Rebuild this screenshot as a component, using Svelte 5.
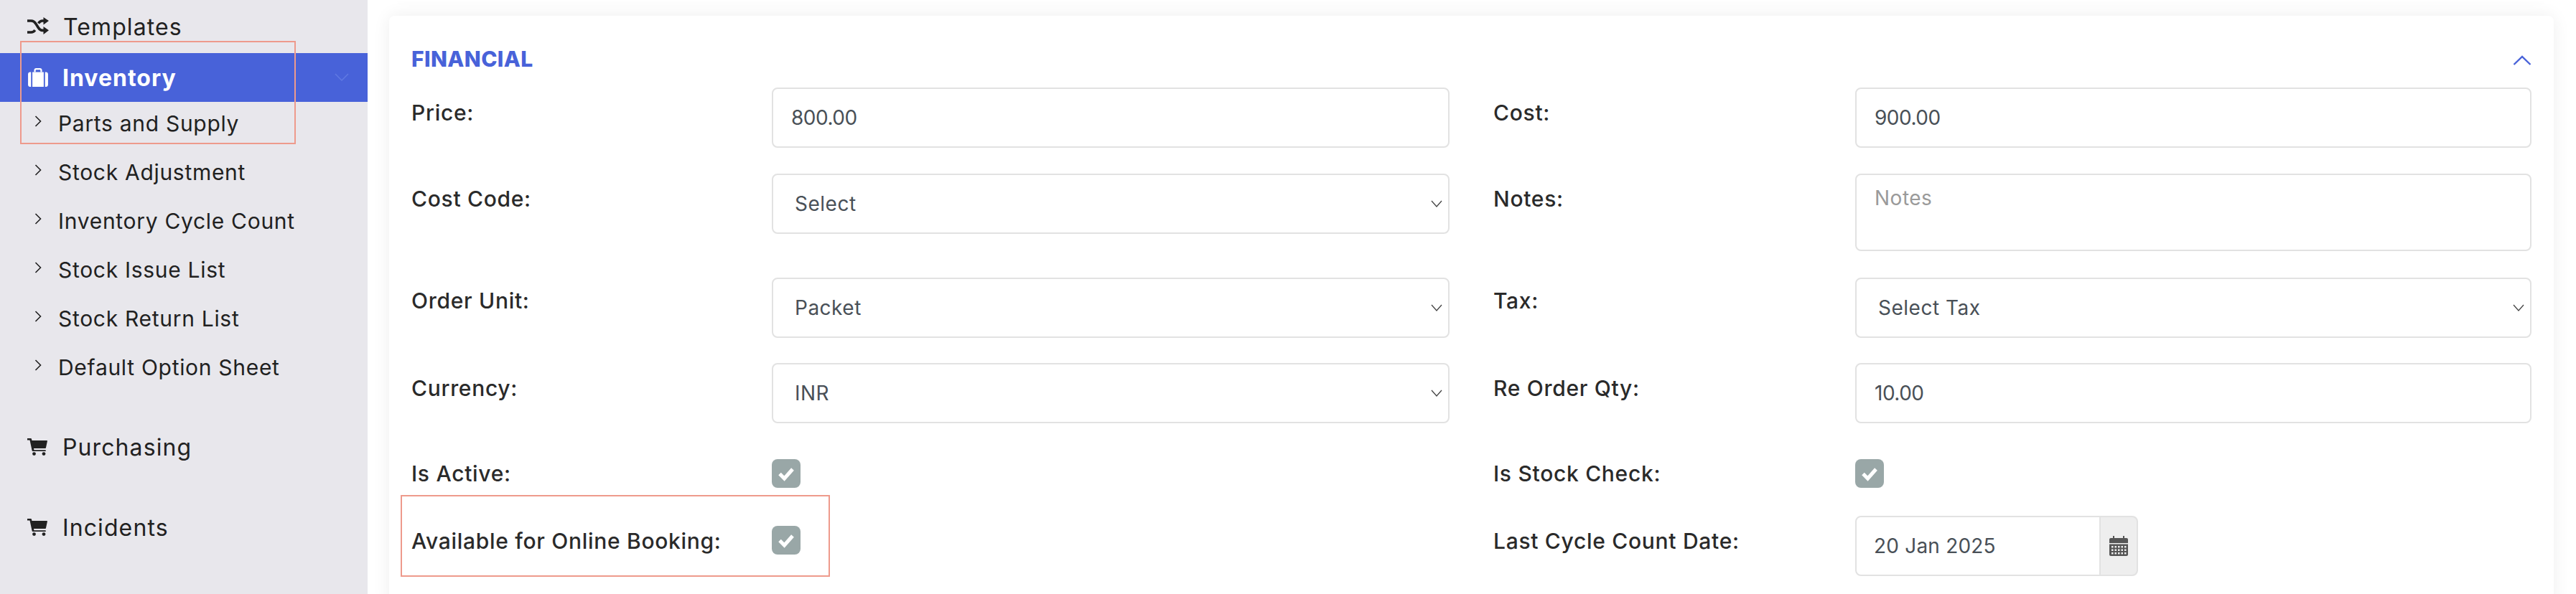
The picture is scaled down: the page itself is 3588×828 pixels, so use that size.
<script>
	const subItems = [
		'Parts and Supply',
		'Stock Adjustment',
		'Inventory Cycle Count',
		'Stock Issue List',
		'Stock Return List',
		'Default Option Sheet'
	];
</script>

{#snippet cart()}
	<svg class="cart" viewBox="0 0 28 24" aria-hidden="true">
		<path d="M0 0h4.600c.8 0 1.300.5 1.500 1.200L6.400 3H27c.7 0 1 .5.9 1.100l-1.900 9c-.1.6-.6 1-1.200 1H9l.4 2.200h15.400c.6 0 1 .4 1 1v.8H7.900c-.7 0-1.200-.4-1.300-1L3.500 2.400H0z" />
		<circle cx="9.500" cy="21.600" r="2.400" />
		<circle cx="23" cy="21.600" r="2.400" />
	</svg>
{/snippet}

{#snippet check()}
	<span class="checkbox">
		<svg viewBox="0 0 40 40" aria-hidden="true">
			<path d="M11 20.500l6.500 6.500L29 14" fill="none" stroke="#fff" stroke-width="5" />
		</svg>
	</span>
{/snippet}

{#snippet arrow()}
	<svg class="select-arrow" viewBox="0 0 16 10" aria-hidden="true">
		<path d="M1 1l7 8 7-8" fill="none" stroke="#444" stroke-width="1.300" />
	</svg>
{/snippet}

<div class="page">
	<aside class="sidebar">
		<div class="nav-item templates">
			<svg class="nav-icon shuffle" viewBox="0 0 30 26" aria-hidden="true">
				<path d="M0 5h5.500c3 0 4.800 1.600 6.500 4.200l3.500 5.600c1.500 2.300 3 3.600 5.500 3.600h2" fill="none" stroke="#212121" stroke-width="3.600" />
				<path d="M0 21h5.500c2.500 0 4-1.200 5.300-3M15.500 8.500c1.500-2 3-3.500 5.500-3.500h2" fill="none" stroke="#212121" stroke-width="3.600" />
				<path d="M22.500 0L30 5l-7.500 5.500zM22.500 13L30 18.300l-7.500 5.700z" fill="#212121" />
			</svg>
			<span>Templates</span>
		</div>
		<div class="nav-item active">
			<svg class="nav-icon" viewBox="0 0 30 28" aria-hidden="true">
				<path d="M9 6V3c0-1.700 1.300-3 3-3h6c1.700 0 3 1.300 3 3v3h-2.400V3.200c0-.5-.3-.8-.8-.8h-5.600c-.5 0-.8.300-.8.800V6z" fill="#fff" />
				<path d="M6.500 6h17v22h-17zM4.500 6v22H3c-1.700 0-3-1.300-3-3V9c0-1.700 1.300-3 3-3zM25.500 6H27c1.700 0 3 1.300 3 3v16c0 1.700-1.300 3-3 3h-1.500z" fill="#fff" />
			</svg>
			<span>Inventory</span>
			<svg class="nav-caret" viewBox="0 0 20 11" aria-hidden="true">
				<path d="M1 1l9 9 9-9" fill="none" stroke="#6079e2" stroke-width="1.500" />
			</svg>
		</div>
		<ul class="sub-list">
			{#each subItems as item}
				<li>
					<svg viewBox="0 0 10 16" aria-hidden="true">
						<path d="M1.500 1l7 7-7 7" fill="none" stroke="#212121" stroke-width="1.600" />
					</svg>
					<span>{item}</span>
				</li>
			{/each}
		</ul>
		<div class="nav-item purchasing">
			{@render cart()}
			<span>Purchasing</span>
		</div>
		<div class="nav-item incidents">
			{@render cart()}
			<span>Incidents</span>
		</div>
		<div class="annotation nav-note"></div>
	</aside>

	<main class="content">
		<div class="card stub"></div>
		<section class="card">
			<header class="card-head">
				<h2>FINANCIAL</h2>
				<svg viewBox="0 0 26 14" aria-hidden="true">
					<path d="M1.500 13L13 2l11.500 11" fill="none" stroke="#4862d9" stroke-width="2.400" />
				</svg>
			</header>

			<div class="row r1">
				<div class="label">Price:</div>
				<div class="field num">800.00</div>
				<div></div>
				<div class="label">Cost:</div>
				<div class="field num">900.00</div>
			</div>
			<div class="row r2">
				<div class="label">Cost Code:</div>
				<div class="field select"><span>Select</span>{@render arrow()}</div>
				<div></div>
				<div class="label">Notes:</div>
				<div class="field textarea">Notes</div>
			</div>
			<div class="row r3">
				<div class="label up">Order Unit:</div>
				<div class="field select"><span>Packet</span>{@render arrow()}</div>
				<div></div>
				<div class="label up">Tax:</div>
				<div class="field select"><span>Select Tax</span>{@render arrow()}</div>
			</div>
			<div class="row r4">
				<div class="label">Currency:</div>
				<div class="field select"><span>INR</span>{@render arrow()}</div>
				<div></div>
				<div class="label">Re Order Qty:</div>
				<div class="field num">10.00</div>
			</div>
			<div class="row r5">
				<div class="label flat">Is Active:</div>
				<div>{@render check()}</div>
				<div></div>
				<div class="label flat">Is Stock Check:</div>
				<div>{@render check()}</div>
			</div>
			<div class="row r6">
				<div class="label online">Available for Online Booking:</div>
				<div class="online-check">{@render check()}</div>
				<div></div>
				<div class="label online">Last Cycle Count Date:</div>
				<div class="date">
					<div class="date-value">20 Jan 2025</div>
					<div class="date-addon">
						<svg viewBox="0 0 26 28" aria-hidden="true">
							<path fill="#555" d="M5 0h2v3h12V0h2v3h3c1.100 0 2 .9 2 2v5H0V5c0-1.100.9-2 2-2h3z" />
							<path fill="#555" fill-rule="evenodd" d="M0 11.500h26V26c0 1.100-.9 2-2 2H2c-1.100 0-2-.9-2-2zM3 14v2.500h2.500V14zm4.500 0v2.500H10V14zm4.500 0v2.500h2.500V14zm4.500 0v2.500H19V14zm4.500 0v2.500h2.500V14zM3 18.500V21h2.500v-2.500zm4.500 0V21H10v-2.500zm4.500 0V21h2.500v-2.500zm4.500 0V21h2.500v-2.500zm4.500 0V21h2.500v-2.500zM3 23v2.500h2.500V23zm4.500 0v2.500H10V23zm4.500 0v2.500h2.500V23zm4.500 0v2.500H19V23zm4.500 0v2.500h2.500V23z" />
						</svg>
					</div>
				</div>
			</div>
			<div class="annotation form-note"></div>
		</section>
	</main>
</div>

<style>
	:global(body) {
		margin: 0;
		background: #fff;
	}

	.page {
		display: flex;
		width: 3588px;
		height: 828px;
		overflow: hidden;
		font-family: Inter, "Noto Sans", sans-serif;
		color: #212121;
	}

	.sidebar {
		position: relative;
		flex: none;
		width: 512px;
		background: #e8e7ec;
		box-sizing: border-box;
	}

	.nav-item {
		display: flex;
		align-items: center;
		height: 68px;
		padding-left: 38px;
		font-size: 32px;
		letter-spacing: 1.1px;
		box-sizing: border-box;
	}

	.templates {
		height: 74px;
	}

	.templates span {
		margin-left: 20px;
	}

	.nav-icon {
		width: 30px;
		height: 26px;
		flex: none;
	}

	.active {
		position: relative;
		background: #4862d9;
		color: #fff;
		font-weight: 700;
		letter-spacing: 1px;
	}

	.active span {
		margin-left: 19px;
	}

	.nav-caret {
		position: absolute;
		left: 466px;
		top: 28px;
		width: 20px;
		height: 11px;
	}

	.sub-list {
		list-style: none;
		margin: 0;
		padding: 0;
	}

	.sub-list li {
		display: flex;
		align-items: flex-start;
		height: 68px;
		padding-left: 48px;
		box-sizing: border-box;
		font-size: 30px;
		letter-spacing: 0.7px;
		line-height: 60px;
	}

	.sub-list svg {
		width: 10px;
		height: 16px;
		flex: none;
		margin-top: 19px;
	}

	.sub-list span {
		margin-left: 23px;
	}

	.purchasing {
		margin-top: 17px;
		height: 112px;
	}

	.incidents {
		height: 112px;
	}

	.cart {
		width: 28px;
		height: 24px;
		flex: none;
		fill: #212121;
	}

	.purchasing span,
	.incidents span {
		margin-left: 21px;
	}

	.annotation {
		position: absolute;
		border: 2px solid #ee9a8c;
		box-sizing: border-box;
		pointer-events: none;
	}

	.nav-note {
		left: 28px;
		top: 57px;
		width: 384px;
		height: 144px;
	}

	.content {
		flex: 1;
		min-width: 0;
		padding: 0 31px 0 30px;
	}

	.card {
		position: relative;
		background: #fff;
		border-radius: 8px;
		box-shadow: 0 0 24px rgba(0, 0, 0, 0.07);
		padding: 0 31px;
		margin-bottom: 20px;
	}

	.stub {
		height: 2px;
		padding: 0;
		border-radius: 0 0 8px 8px;
		margin-right: 2px;
	}

	.card-head {
		display: flex;
		justify-content: space-between;
		align-items: center;
		box-sizing: border-box;
		height: 100px;
		padding-top: 20px;
	}

	.card-head h2 {
		margin: 0;
		font-size: 30px;
		font-weight: 800;
		color: #4862d9;
		letter-spacing: 0.4px;
	}

	.card-head svg {
		width: 26px;
		height: 14px;
		margin-top: 3px;
	}

	.row {
		display: grid;
		grid-template-columns: 502px 944px 61px 504px 942px;
	}

	.r1 { height: 120px; }
	.r2 { height: 145px; }
	.r3 { height: 119px; }
	.r4 { height: 134px; }
	.r5 { height: 79px; }
	.r6 { height: 130px; }

	.label {
		font-size: 30px;
		font-weight: 500;
		letter-spacing: 0.7px;
		line-height: 40px;
		padding-top: 15px;
		color: #2a2a2a;
	}

	.up {
		padding-top: 12px;
	}

	.flat {
		padding-top: 0;
	}

	.online {
		padding-top: 15px;
	}

	.online-check {
		padding-top: 14px;
	}

	.field {
		box-sizing: border-box;
		display: flex;
		align-items: center;
		height: 84px;
		padding: 0 0 0 25px;
		border: 2px solid #e2e2e2;
		border-radius: 8px;
		font-size: 28px;
		letter-spacing: 0.5px;
		color: #495057;
		background: #fff;
	}

	.num {
		letter-spacing: -0.5px;
	}

	.select {
		justify-content: space-between;
		padding-left: 30px;
		padding-right: 8px;
	}

	.textarea {
		height: 108px;
		align-items: flex-start;
		padding-top: 12px;
		line-height: 40px;
		color: #9a9a9a;
	}

	.select-arrow {
		width: 16px;
		height: 10px;
	}

	.checkbox {
		display: block;
		width: 40px;
		height: 40px;
		border-radius: 8px;
		background: #99a7a7;
	}

	.checkbox svg {
		display: block;
		width: 40px;
		height: 40px;
	}

	.date {
		display: flex;
		width: 394px;
		height: 84px;
		box-sizing: border-box;
		border: 2px solid #e2e2e2;
		border-radius: 8px;
		overflow: hidden;
	}

	.date-value {
		flex: 1;
		display: flex;
		align-items: center;
		padding-left: 24px;
		font-size: 28px;
		letter-spacing: 0.2px;
		color: #495057;
	}

	.date-addon {
		display: flex;
		align-items: center;
		justify-content: center;
		width: 54px;
		margin: -2px -2px -2px 0;
		background: #eee;
		border: 2px solid #ccc;
		border-radius: 0 8px 8px 0;
		border-left-color: #e2e2e2;
		box-sizing: border-box;
	}

	.date-addon svg {
		width: 26px;
		height: 28px;
	}

	.form-note {
		left: 16px;
		top: 668px;
		width: 598px;
		height: 114px;
	}
</style>
